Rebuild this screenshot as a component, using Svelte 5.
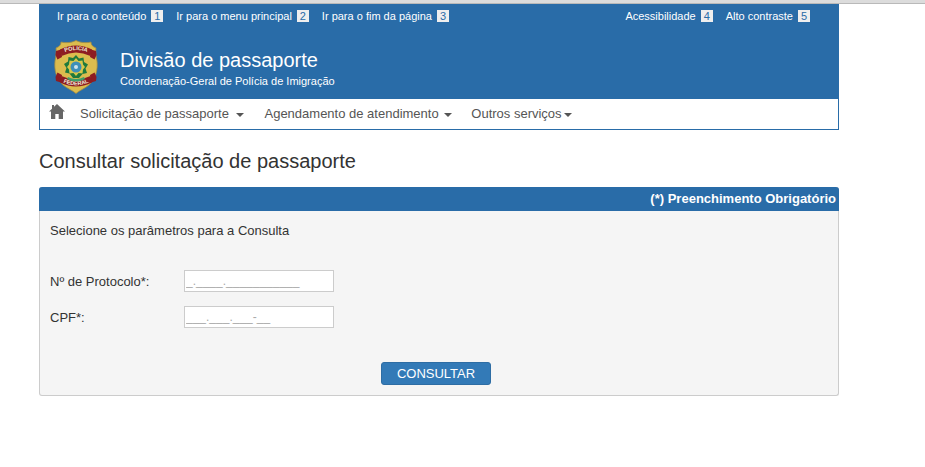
<script>
  const leftLinks = [
    { label: 'Ir para o conteúdo', key: '1' },
    { label: 'Ir para o menu principal', key: '2' },
    { label: 'Ir para o fim da página', key: '3' }
  ];
  const rightLinks = [
    { label: 'Acessibilidade', key: '4' },
    { label: 'Alto contraste', key: '5' }
  ];
</script>

<div class="chrome"></div>
<div class="page">
  <header class="header">
    <div class="access">
      <div class="links">
        {#each leftLinks as l}
          <a href="#top" class="alink">{l.label}<span class="key">{l.key}</span></a>
        {/each}
      </div>
      <div class="links right">
        {#each rightLinks as l}
          <a href="#top" class="alink">{l.label}<span class="key">{l.key}</span></a>
        {/each}
      </div>
    </div>
    <div class="brand">
      <svg class="badge" viewBox="0 0 44 54" width="44" height="54" aria-hidden="true">
        <path d="M22 .5C27 3 33 3 37 2c0 3 1.500 4.500 5 6-.5 4 0 8 1 13 1 8-1 18-8 24-4 3.500-9 5-13 8.500C18 50 13 48.500 9 45 2 39 0 29 1 21c1-5 1.500-9 1-13 3.500-1.500 5-3 5-6 4 1 10 1 15-1.500z" fill="#dcbc4e" stroke="#a08a45" stroke-width=".8"/>
        <path d="M2 11 7 9.500 8 17 3.500 19.500 1.500 15z" fill="#8d1c22"/>
        <path d="M42 11 37 9.500 36 17 40.500 19.500 42.500 15z" fill="#8d1c22"/>
        <path d="M2 41 7 42.500 8 35 3.500 32.500 1.500 37z" fill="#8d1c22"/>
        <path d="M42 41 37 42.500 36 35 40.500 32.500 42.500 37z" fill="#8d1c22"/>
        <path d="M6 9.500Q22 1.500 38 9.500l-1.500 6.500Q22 9 7.500 16z" fill="#8d1c22"/>
        <path d="M6 42.500Q22 50.500 38 42.500L36.500 36Q22 43 7.500 36z" fill="#8d1c22"/>
        <path id="arcTop" d="M8 13.500Q22 6.500 36 13.500" fill="none"/>
        <path id="arcBottom" d="M8 42Q22 48.500 36 42" fill="none"/>
        <text class="bt"><textPath href="#arcTop" startOffset="50%" text-anchor="middle">POLICIA</textPath></text>
        <text class="bt"><textPath href="#arcBottom" startOffset="50%" text-anchor="middle">FEDERAL</textPath></text>
        <path d="M22 15l3 3.500 4.500-1 .5 4.500 4 2.500-2.500 4 1.500 4.500-4.500 1L25 38h-6l-3.500-4.500-4.500-1 1.500-4.500-2.500-4 4-2.500.5-4.500 4.500 1z" fill="#1f7a3c"/>
        <path d="M22 18l2.500 3 4-.5.5 4 2 2.500-2 2.500-.5 4-4-.5-2.500 3-2.500-3-4 .5-.5-4-2-2.500 2-2.500.5-4 4 .5z" fill="#d9c64a"/>
        <circle cx="22" cy="27" r="5.500" fill="#3f8fb8"/>
        <circle cx="22" cy="27" r="2" fill="#cfe3ee"/>
        <path d="M13 39Q22 44 31 39l-1-2Q22 41 14 37z" fill="#3fa06a"/>
      </svg>
      <div class="titles">
        <h1>Divisão de passaporte</h1>
        <p>Coordenação-Geral de Polícia de Imigração</p>
      </div>
    </div>
    <nav class="nav">
      <svg class="home" viewBox="0 0 16 15" width="16" height="15" aria-hidden="true">
        <path d="M8 0 16 7.500H14V15H9.700V10H6.300V15H2V7.500H0L3 4.700V1H5V2.800z" fill="#666"/>
      </svg>
      <a href="#top">Solicitação de passaporte <b class="caret wide"></b></a>
      <a href="#top">Agendamento de atendimento <b class="caret"></b></a>
      <a href="#top" class="last">Outros serviços<b class="caret"></b></a>
    </nav>
  </header>

  <h2 class="heading">Consultar solicitação de passaporte</h2>

  <section class="panel">
    <div class="panel-head">(*) Preenchimento Obrigatório</div>
    <div class="panel-body">
      <p class="intro">Selecione os parâmetros para a Consulta</p>
      <div class="field first">
        <label for="proto">Nº de Protocolo*:</label>
        <input id="proto" placeholder="_.____.___________" />
      </div>
      <div class="field">
        <label for="cpf">CPF*:</label>
        <input id="cpf" placeholder="___.___.___-__" />
      </div>
      <div class="actions">
        <button type="button">CONSULTAR</button>
      </div>
    </div>
  </section>
</div>

<style>
  :global(body) {
    margin: 0;
    background: #fff;
    font-family: "Liberation Sans", Arial, sans-serif;
    color: #333;
  }
  .chrome {
    height: 3px;
    background: #dcdcdc;
    border-bottom: 1px solid #b9b9b9;
  }
  .page {
    width: 800px;
    margin-left: 39px;
  }
  .header {
    background: #296ca8;
    color: #fff;
  }
  .access {
    display: flex;
    justify-content: space-between;
    padding: 6px 29px 0 18px;
    height: 19px;
  }
  .links {
    display: flex;
    gap: 13px;
  }
  .alink {
    color: #fff;
    text-decoration: none;
    font-size: 11px;
    line-height: 13px;
    white-space: nowrap;
  }
  .key {
    display: inline-block;
    width: 12px;
    height: 12px;
    margin-left: 5px;
    background: #eee;
    color: #296ca8;
    text-align: center;
    font-size: 11px;
    line-height: 12px;
    vertical-align: top;
  }
  .brand {
    display: flex;
    height: 70px;
    padding: 8px 0 0 15px;
    box-sizing: border-box;
  }
  .badge {
    flex: none;
    margin-top: 3px;
  }
  .bt {
    font-size: 5.600px;
    font-weight: 700;
    fill: #f3ebdc;
  }
  .titles {
    margin-left: 22px;
  }
  h1 {
    margin: 11px 0 0;
    font-size: 20px;
    line-height: 24px;
    font-weight: 400;
  }
  .titles p {
    margin: 3px 0 0;
    font-size: 11px;
    line-height: 13px;
  }
  .nav {
    display: flex;
    align-items: center;
    height: 30px;
    background: #fff;
    border: 1px solid #296ca8;
    border-top: 0;
    width: 798px;
  }
  .home {
    margin: -5px 0 0 9px;
    flex: none;
  }
  .nav a {
    color: #555;
    text-decoration: none;
    font-size: 13px;
    line-height: 30px;
    margin-left: 15px;
    white-space: nowrap;
  }
  .nav a + a {
    margin-left: 20px;
  }
  .nav a.last {
    margin-left: 19px;
  }
  .caret {
    display: inline-block;
    width: 0;
    height: 0;
    margin-left: 2px;
    vertical-align: middle;
    border-top: 4px solid #555;
    border-left: 4px solid transparent;
    border-right: 4px solid transparent;
  }
  .caret.wide {
    margin-left: 4px;
  }
  .heading {
    margin: 21px 0 0;
    font-size: 20px;
    line-height: 21px;
    font-weight: 400;
  }
  .panel {
    margin-top: 15px;
    border: 1px solid #ccc;
    border-top: 0;
    border-radius: 3px;
    background: #f5f5f5;
  }
  .panel-head {
    margin: 0 -1px;
    height: 24px;
    background: #296ca8;
    color: #fff;
    font-size: 13px;
    font-weight: 700;
    line-height: 24px;
    text-align: right;
    padding-right: 3px;
    border-radius: 3px 3px 0 0;
  }
  .panel-body {
    padding: 12px 10px 9px;
    height: 184px;
    box-sizing: border-box;
    font-size: 13px;
  }
  .intro {
    margin: 0;
    line-height: 16px;
    font-size: 13px;
  }
  .field {
    display: flex;
    align-items: center;
    margin-top: 14px;
  }
  .field.first {
    margin-top: 31px;
  }
  .field label {
    width: 134px;
    flex: none;
  }
  .field input {
    width: 150px;
    height: 22px;
    box-sizing: border-box;
    border: 1px solid #ccc;
    background: #fff;
    padding: 0 0 0 1px;
    font: 12px "Liberation Sans", Arial, sans-serif;
    outline: 0;
  }
  .field input::placeholder {
    color: #aaa;
    opacity: 1;
  }
  .actions {
    display: flex;
    justify-content: center;
    margin-top: 34px;
    padding-right: 6px;
  }
  button {
    width: 110px;
    height: 23px;
    padding: 0;
    background: #337ab7;
    border: 1px solid #2e6da4;
    border-radius: 3px;
    color: #fff;
    font: 13px/21px "Liberation Sans", Arial, sans-serif;
  }
</style>
